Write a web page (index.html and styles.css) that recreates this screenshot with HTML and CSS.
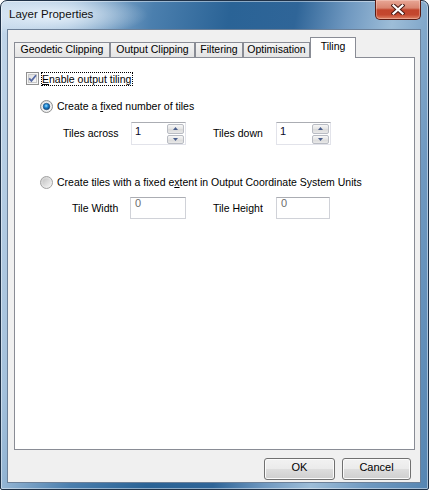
FILE: index.html
```html
<!DOCTYPE html>
<html>
<head>
<meta charset="utf-8">
<title>Layer Properties</title>
<link rel="stylesheet" href="styles.css">
</head>
<body>
<div class="window">
  <div class="titlebar">
    <span class="title">Layer Properties</span>
    <div class="close">
      <svg width="14" height="11" viewBox="0 0 14 11">
        <path d="M2.5 1.5 L11.5 9.5 M11.5 1.5 L2.5 9.5" fill="none" stroke="#4a1a14" stroke-width="4.2" stroke-linecap="square"/>
        <path d="M2.5 1.5 L11.5 9.5 M11.5 1.5 L2.5 9.5" fill="none" stroke="#ffffff" stroke-width="2.2" stroke-linecap="square"/>
      </svg>
    </div>
  </div>
  <div class="client">
    <div class="tabs">
      <div class="tab tab-geo">Geodetic Clipping</div>
      <div class="tab tab-out">Output Clipping</div>
      <div class="tab tab-filt">Filtering</div>
      <div class="tab tab-opt">Optimisation</div>
      <div class="tab tab-tiling active">Tiling</div>
    </div>
    <div class="panel">
      <div class="check-row">
        <svg class="checkbox" width="13" height="13" viewBox="0 0 13 13">
          <defs>
            <linearGradient id="cbg" x1="0" y1="0" x2="1" y2="1">
              <stop offset="0" stop-color="#dcdcdc"/>
              <stop offset="1" stop-color="#fbfbfb"/>
            </linearGradient>
          </defs>
          <rect x="0.5" y="0.5" width="12" height="12" fill="#f6f6f6" stroke="#8f8f8f"/>
          <rect x="2.5" y="2.5" width="8" height="8" fill="url(#cbg)" stroke="#c9c9c9"/>
          <path d="M3.2 6.4 L5.4 8.9 L10 3.2" fill="none" stroke="#5669a3" stroke-width="1.7"/>
        </svg>
        <span class="focus"><u>E</u>nable output tiling</span>
      </div>

      <div class="radio-row r1">
        <svg class="radio" width="13" height="13" viewBox="0 0 13 13">
          <defs>
            <radialGradient id="rdot" cx="45%" cy="40%" r="60%">
              <stop offset="0" stop-color="#9fdcff"/>
              <stop offset="0.45" stop-color="#1f8ad4"/>
              <stop offset="1" stop-color="#0b3c74"/>
            </radialGradient>
            <linearGradient id="rbg1" x1="0" y1="0" x2="1" y2="1">
              <stop offset="0" stop-color="#d6d6d6"/>
              <stop offset="1" stop-color="#f8f8f8"/>
            </linearGradient>
          </defs>
          <circle cx="6.5" cy="6.5" r="6" fill="url(#rbg1)" stroke="#8e8f8f"/>
          <circle cx="6.5" cy="6.5" r="4.3" fill="#fafafa"/>
          <circle cx="6.5" cy="6.5" r="3.3" fill="url(#rdot)" stroke="#1d4d7c" stroke-width="0.6"/>
        </svg>
        <span class="rtext">Create a <u>f</u>ixed number of tiles</span>
      </div>

      <div class="field-row fr1">
        <span class="lbl lbl-across">Tiles across</span>
        <div class="spin">
          <span class="val">1</span>
          <div class="arrows">
            <span class="arr"><svg width="5" height="3" viewBox="0 0 5 3"><path d="M0 3 L2.5 0 L5 3 Z" fill="#4b5f8c"/></svg></span>
            <span class="arr"><svg width="5" height="3" viewBox="0 0 5 3"><path d="M0 0 L2.5 3 L5 0 Z" fill="#4b5f8c"/></svg></span>
          </div>
        </div>
        <span class="lbl lbl-down">Tiles down</span>
        <div class="spin">
          <span class="val">1</span>
          <div class="arrows">
            <span class="arr"><svg width="5" height="3" viewBox="0 0 5 3"><path d="M0 3 L2.5 0 L5 3 Z" fill="#4b5f8c"/></svg></span>
            <span class="arr"><svg width="5" height="3" viewBox="0 0 5 3"><path d="M0 0 L2.5 3 L5 0 Z" fill="#4b5f8c"/></svg></span>
          </div>
        </div>
      </div>

      <div class="radio-row r2">
        <svg class="radio" width="13" height="13" viewBox="0 0 13 13">
          <defs>
            <linearGradient id="rbg2" x1="0" y1="0" x2="1" y2="1">
              <stop offset="0" stop-color="#cfcfcf"/>
              <stop offset="1" stop-color="#f7f7f7"/>
            </linearGradient>
            <linearGradient id="rin2" x1="0" y1="0" x2="1" y2="1">
              <stop offset="0" stop-color="#c4c4c4"/>
              <stop offset="1" stop-color="#f2f2f2"/>
            </linearGradient>
          </defs>
          <circle cx="6.5" cy="6.5" r="6" fill="url(#rbg2)" stroke="#a2a2a2"/>
          <circle cx="6.5" cy="6.5" r="4" fill="url(#rin2)"/>
        </svg>
        <span class="rtext">Create tiles with a fixed e<u>x</u>tent in Output Coordinate System Units</span>
      </div>

      <div class="field-row fr2">
        <span class="lbl lbl-width">Tile Width</span>
        <div class="textbox tb-width"><span class="dval">0</span></div>
        <span class="lbl lbl-height">Tile Height</span>
        <div class="textbox tb-height"><span class="dval">0</span></div>
      </div>
    </div>
    <div class="buttons">
      <div class="btn btn-ok">OK</div>
      <div class="btn btn-cancel">Cancel</div>
    </div>
  </div>
</div>
</body>
</html>
```

FILE: styles.css
```css
html, body {
  margin: 0;
  padding: 0;
  background: #ffffff;
}

.window {
  width: 429px;
  height: 490px;
  box-sizing: border-box;
  border: 1px solid #1f3147;
  border-radius: 7px 7px 2px 2px;
  display: flex;
  flex-direction: column;
  background:
    radial-gradient(ellipse 95px 22px at 52px 14px, rgba(235, 244, 252, 0.95), rgba(235, 244, 252, 0) 100%),
    linear-gradient(100deg, #c3d7ea 0%, #a4c1dc 14%, #4b7fae 30%, #2a6396 45%, #2f6598 58%, #6f98c0 68%, #9dbdd8 77%, #6f99c1 88%, #5585b2 100%);
  box-shadow: inset 0 0 0 1px rgba(255, 255, 255, 0.45);
  font-family: "Liberation Sans", Arial, sans-serif;
  font-size: 10.5px;
  color: #000;
}

.titlebar {
  height: 28px;
  display: flex;
  justify-content: space-between;
  align-items: flex-start;
  flex: none;
}

.title {
  font-family: "Liberation Sans", Arial, sans-serif;
  font-size: 11.5px;
  line-height: 14px;
  padding: 6px 0 0 8px;
  color: #111;
}

.close {
  width: 46px;
  height: 20px;
  box-sizing: border-box;
  margin: -1px 7px 0 0;
  border: 1px solid #5b1b12;
  border-top: none;
  border-radius: 0 0 5px 5px;
  background: linear-gradient(#e8a796 0%, #d98570 42%, #c2452c 52%, #c4482f 78%, #df8466 100%);
  box-shadow: inset 0 0 0 1px rgba(255, 230, 220, 0.35);
  display: flex;
  align-items: center;
  justify-content: center;
}

.client {
  flex: 1;
  margin: 0 7px 6px 6px;
  border: 1px solid #6c8098;
  background: #f0f0f0;
  display: flex;
  flex-direction: column;
  padding: 7px 5px 2px 6px;
}

.tabs {
  display: flex;
  align-items: flex-end;
  height: 20px;
  position: relative;
  z-index: 1;
  flex: none;
}

.tab {
  box-sizing: border-box;
  height: 15px;
  border: 1px solid #898c95;
  border-bottom: none;
  background: linear-gradient(#f3f3f3, #e4e4e4);
  text-align: center;
  line-height: 13px;
  white-space: nowrap;
  flex: none;
}

.tab-geo { width: 96px; }
.tab-out { width: 85px; }
.tab-filt { width: 48px; }
.tab-opt { width: 67px; }
.tab-tiling { width: 46px; }

.tab.active {
  height: 21px;
  margin-bottom: -1px;
  background: #ffffff;
  padding-top: 2px;
}

.panel {
  flex: 1;
  border: 1px solid #898c95;
  background: #ffffff;
  display: flex;
  flex-direction: column;
  align-items: flex-start;
}

.check-row {
  display: flex;
  align-items: flex-start;
  margin: 14px 0 0 11px;
  height: 14px;
}

.checkbox {
  display: block;
  flex: none;
}

.focus {
  margin-left: 2px;
  border: 1px dotted #000;
  line-height: 12px;
  padding: 0 1px 0 0;
}

.radio-row {
  display: flex;
  align-items: flex-start;
  margin-left: 25px;
  height: 13px;
  line-height: 13px;
}

.r1 { margin-top: 14px; }
.r2 { margin-top: 31px; }

.radio {
  display: block;
  flex: none;
}

.rtext {
  margin-left: 4px;
  white-space: nowrap;
}

.field-row {
  display: flex;
  align-items: flex-start;
}

.fr1 {
  margin-top: 9px;
  margin-left: 48px;
}

.fr2 {
  margin-top: 8px;
  margin-left: 57px;
}

.lbl {
  line-height: 13px;
  padding-top: 5px;
  flex: none;
  white-space: nowrap;
}

.lbl-across { width: 68px; }
.lbl-down { width: 63px; margin-left: 27px; }
.lbl-width { width: 58px; }
.lbl-height { width: 63px; margin-left: 27px; }

.spin {
  box-sizing: border-box;
  width: 55px;
  height: 23px;
  border: 1px solid #e2e3ea;
  border-top-color: #abadb3;
  display: flex;
  background: #fff;
  flex: none;
}

.val {
  flex: 1;
  line-height: 13px;
  padding: 2px 0 0 3px;
  font-size: 11px;
  color: #0a0a2a;
}

.arrows {
  width: 17px;
  display: flex;
  flex-direction: column;
  gap: 1px;
  padding: 1px 1px 0 0;
}

.arr {
  flex: 1;
  box-sizing: border-box;
  border: 1px solid #b9bcc3;
  border-radius: 2px;
  background: linear-gradient(#f7f7f7, #e4e4e4 50%, #d9d9d9 51%, #e9e9e9);
  display: flex;
  align-items: center;
  justify-content: center;
}

.arr svg {
  display: block;
}

.textbox {
  box-sizing: border-box;
  height: 22px;
  border: 1px solid #d0d2d8;
  border-top-color: #abadb3;
  background: #fff;
  flex: none;
}

.tb-width { width: 56px; }
.tb-height { width: 54px; }

.dval {
  display: block;
  line-height: 12px;
  padding: 0 0 0 4px;
  margin-top: -1px;
  font-size: 11px;
  color: #6d6d6d;
}

.buttons {
  display: flex;
  justify-content: flex-end;
  gap: 7px;
  margin: 8px 4px 0 0;
  flex: none;
}

.btn {
  box-sizing: border-box;
  height: 22px;
  border: 1px solid #707070;
  border-radius: 3px;
  background: linear-gradient(#f2f2f2 0%, #ebebeb 48%, #dddddd 52%, #cfcfcf 100%);
  box-shadow: inset 0 0 0 1px #fbfbfb;
  display: flex;
  justify-content: center;
  align-items: flex-start;
  line-height: 13px;
  padding-top: 2px;
  font-size: 11px;
}

.btn-ok { width: 71px; }
.btn-cancel { width: 69px; }
```
